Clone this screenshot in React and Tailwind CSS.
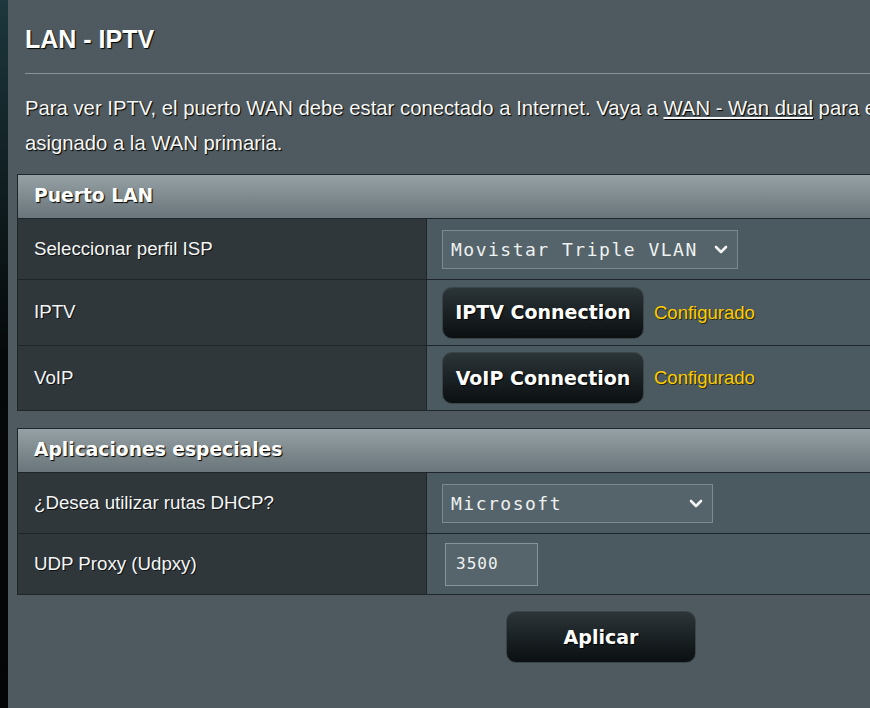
import React from "react";

const shadow = "[text-shadow:1px_1px_1px_#000]";

const Chevron = () => (
  <svg width="14" height="9" viewBox="0 0 14 9" className="shrink-0">
    <polyline
      points="2,2 7,7 12,2"
      fill="none"
      stroke="#f2f4f4"
      strokeWidth="2.6"
      strokeLinecap="round"
      strokeLinejoin="round"
    />
  </svg>
);

const FakeSelect = ({ value, width }) => (
  <div
    className={`flex items-center justify-between h-[39px] pl-2 pr-[9px] bg-[#55646a] border border-[#7c8a8f] ${width}`}
  >
    <span className="font-['DejaVu_Sans_Mono',monospace] text-[18px] tracking-[1.5px] text-[#eef1f1]">
      {value}
    </span>
    <Chevron />
  </div>
);

const DarkButton = ({ children, className = "" }) => (
  <button
    className={`rounded-[10px] bg-linear-to-b from-[#2c3538] to-[#0b1012] border border-[#3b4548] text-white font-['DejaVu_Sans',Verdana,sans-serif] font-bold text-[19px] ${shadow} ${className}`}
  >
    {children}
  </button>
);

const Row = ({ label, height, last, children }) => (
  <div className={`flex ${last ? "" : "border-b border-[#1f2629]"}`}>
    <div
      className={`w-[408px] shrink-0 flex items-center pl-4 bg-[#2f373b] text-[18.7px] text-[#f4f6f6] [text-shadow:1px_1px_0_#111] ${height}`}
    >
      {label}
    </div>
    <div className="w-px bg-[#1f2629]" />
    <div className={`flex-1 flex items-center gap-[10px] pl-[15px] bg-[#4b5a60] ${height}`}>
      {children}
    </div>
  </div>
);

const Section = ({ title, children, className = "" }) => (
  <div className={`ml-[9px] w-[900px] border border-[#1f2629] ${className}`}>
    <div
      className={`h-[44px] flex items-center pl-4 bg-linear-to-b from-[#96a1a5] to-[#69757a] border-b border-[#1f2629] font-['DejaVu_Sans',Verdana,sans-serif] font-bold text-[18.7px] text-white ${shadow}`}
    >
      {title}
    </div>
    {children}
  </div>
);

export default function App() {
  return (
    <div className="flex w-[870px] h-[708px] overflow-hidden bg-[#4e5a5f] font-['Liberation_Sans',Arial,sans-serif]">
      <div className="w-2 shrink-0 bg-linear-to-b from-[#1c373d] via-[#06090a] to-[#040506]" />
      <div className="flex-1 min-w-0 flex flex-col">
        <h1
          className={`mt-[27px] ml-[17px] text-[25px] leading-[25px] font-bold text-white ${shadow}`}
        >
          LAN - IPTV
        </h1>
        <div className="mt-[21px] ml-[17px] h-px bg-[#8a9498]" />
        <div
          className={`mt-[17px] ml-[17px] text-[20.3px] leading-[35px] text-[#f6f7f7] whitespace-nowrap ${shadow}`}
        >
          <p>
            Para ver IPTV, el puerto WAN debe estar conectado a Internet. Vaya a{" "}
            <span className="underline underline-offset-2">WAN - Wan dual</span> para
            establecer el puerto WAN
          </p>
          <p>asignado a la WAN primaria.</p>
        </div>

        <Section title="Puerto LAN" className="mt-[13px]">
          <Row label="Seleccionar perfil ISP" height="h-[60px]">
            <FakeSelect value="Movistar Triple VLAN" width="w-[296px]" />
          </Row>
          <Row label="IPTV" height="h-[65px]">
            <DarkButton className="w-[202px] h-[52px]">IPTV Connection</DarkButton>
            <span className="text-[18.5px] text-[#ffcc00] [text-shadow:1px_1px_0_#2a2a10]">
              Configurado
            </span>
          </Row>
          <Row label="VoIP" height="h-[64px]" last>
            <DarkButton className="w-[202px] h-[52px]">VoIP Connection</DarkButton>
            <span className="text-[18.5px] text-[#ffcc00] [text-shadow:1px_1px_0_#2a2a10]">
              Configurado
            </span>
          </Row>
        </Section>

        <Section title="Aplicaciones especiales" className="mt-[17px]">
          <Row label="¿Desea utilizar rutas DHCP?" height="h-[60px]">
            <FakeSelect value="Microsoft" width="w-[271px]" />
          </Row>
          <Row label="UDP Proxy (Udpxy)" height="h-[60px]" last>
            <div className="ml-[3px] w-[93px] h-[43px] flex items-center pl-[10px] bg-[#56656b] border border-[#86939a] font-['DejaVu_Sans_Mono',monospace] text-[16px] tracking-[1px] text-[#eef1f1]">
              3500
            </div>
          </Row>
        </Section>

        <div className="mt-[16px] pl-[498px]">
          <DarkButton className="w-[190px] h-[52px]">Aplicar</DarkButton>
        </div>
      </div>
    </div>
  );
}
